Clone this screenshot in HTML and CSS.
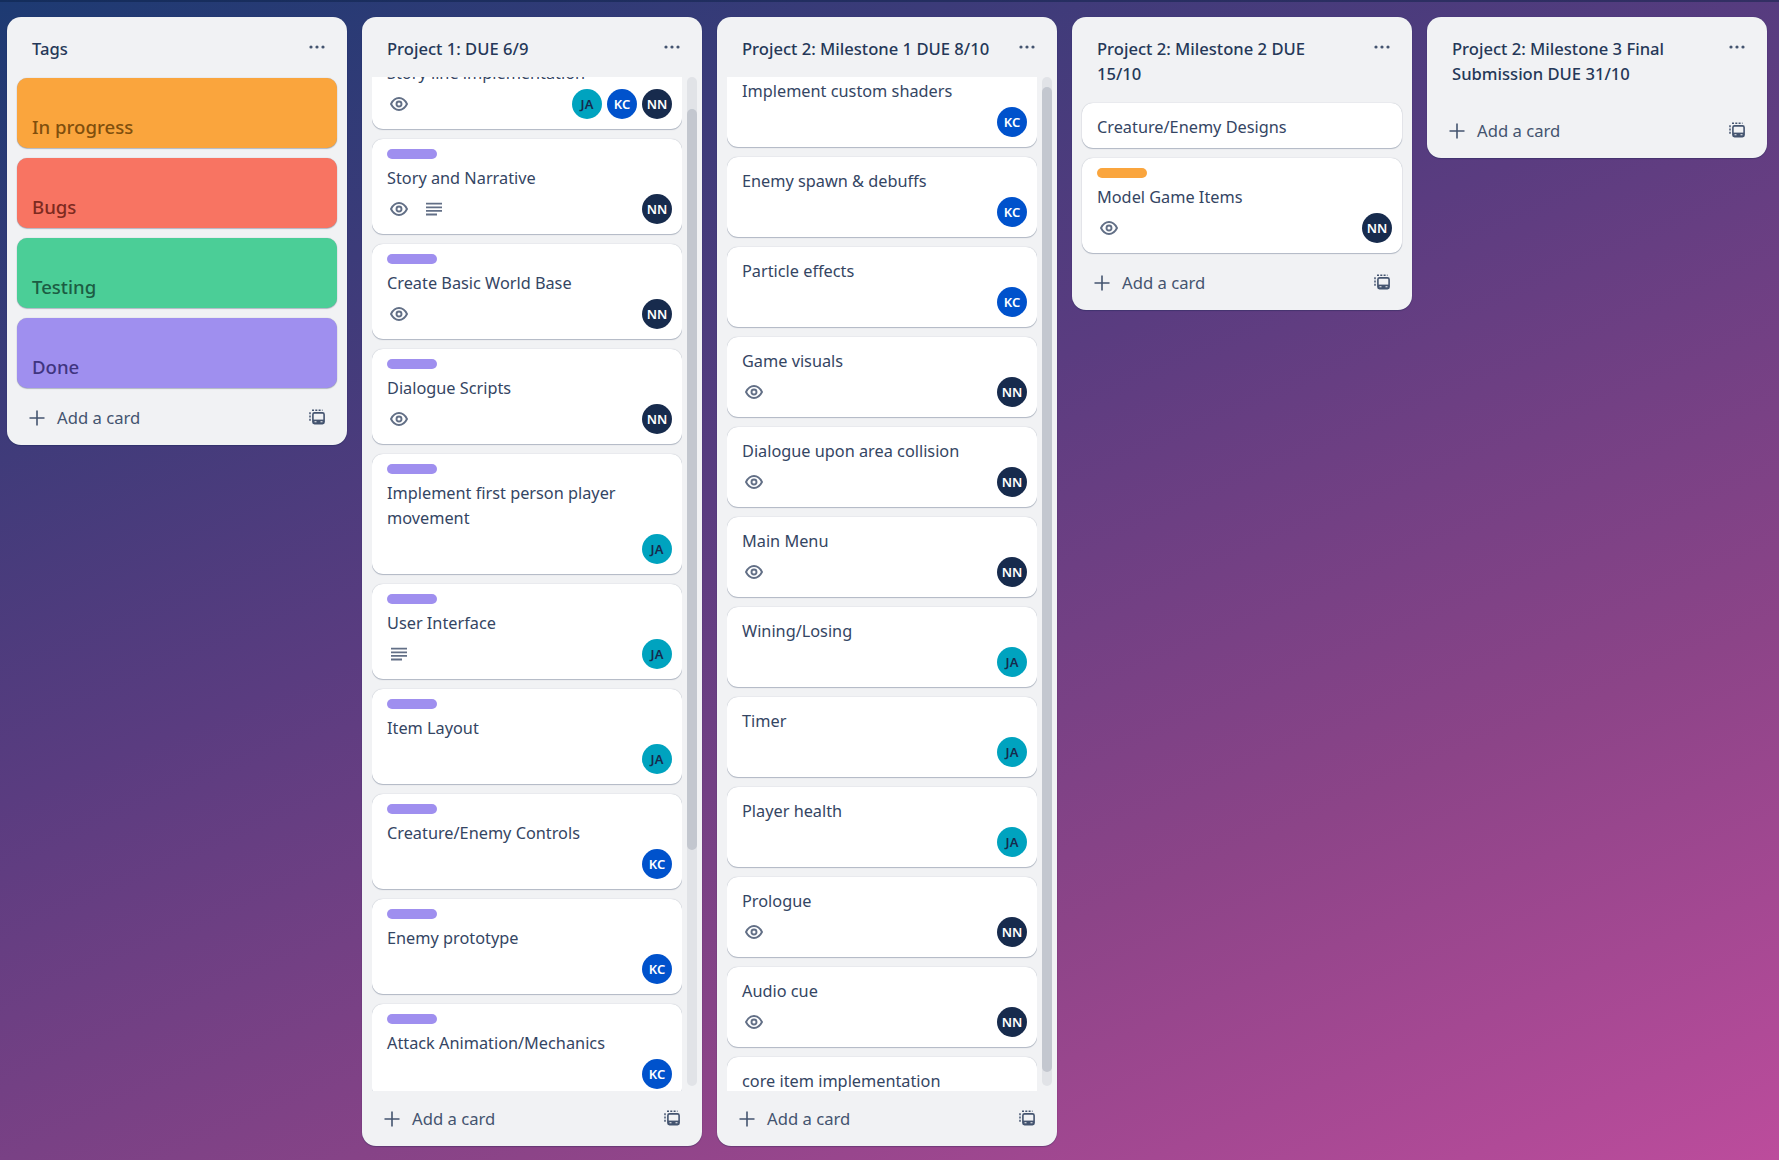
FILE: index.html
```html
<!DOCTYPE html>
<html lang="en">
<head>
<meta charset="utf-8">
<title>Board</title>
<link rel="stylesheet" href="styles.css">
</head>
<body>
<svg class="defs" width="0" height="0" aria-hidden="true">
  <symbol id="i-dots" viewBox="0 0 16 4"><circle cx="2" cy="2" r="1.6"/><circle cx="8" cy="2" r="1.6"/><circle cx="14" cy="2" r="1.6"/></symbol>
  <symbol id="i-plus" viewBox="0 0 16 16"><path d="M7.2 0.5h1.6v6.7h6.7v1.6H8.8v6.7H7.2V8.8H0.5V7.2h6.7z"/></symbol>
  <symbol id="i-tpl" viewBox="0 0 16 16"><path fill="none" stroke="currentColor" stroke-width="1.5" stroke-dasharray="2 1.3" d="M3 1.200h10.500M1 3.200v9.500"/><rect x="3.900" y="3.900" width="11.200" height="10.800" rx="1.600" fill="none" stroke="currentColor" stroke-width="1.600"/><path d="M4 10.600h11v4H4z"/><path fill="#f1f2f4" d="M5.500 12.200h2v1h-2zM11.500 12.200h2v1h-2z"/></symbol>
  <symbol id="i-eye" viewBox="0 0 18 14"><path fill="none" stroke="currentColor" stroke-width="1.900" d="M1 7C3 3 5.800 1 9 1s6 2 8 6c-2 4-4.800 6-8 6S3 11 1 7z"/><circle cx="9" cy="7" r="2.500" fill="none" stroke="currentColor" stroke-width="1.900"/></symbol>
  <symbol id="i-desc" viewBox="0 0 16 14"><path d="M0 0.800h16v1.800H0zM0 4.400h16v1.800H0zM0 8h16v1.800H0zM0 11.600h11v1.800H0z"/></symbol>
</svg>

<main class="board">

  <section class="col">
    <header class="col-head"><h2 class="col-title">Tags</h2><svg class="dots"><use href="#i-dots"/></svg></header>
    <div class="list">
      <div class="tag tag-orange"><span>In progress</span></div>
      <div class="tag tag-red"><span>Bugs</span></div>
      <div class="tag tag-green"><span>Testing</span></div>
      <div class="tag tag-purple"><span>Done</span></div>
    </div>
    <footer class="col-foot"><svg class="plus"><use href="#i-plus"/></svg><span class="add">Add a card</span><svg class="tpl"><use href="#i-tpl"/></svg></footer>
  </section>

  <section class="col col-full">
    <header class="col-head"><h2 class="col-title">Project 1: DUE 6/9</h2><svg class="dots"><use href="#i-dots"/></svg></header>
    <div class="scroll-wrap">
      <div class="scroller scrolled-a">
        <article class="card labelled"><div class="label label-purple"></div><p class="card-text">Story line implementation</p><div class="meta"><svg class="eye"><use href="#i-eye"/></svg><div class="avatars"><span class="av av-ja">JA</span><span class="av av-kc">KC</span><span class="av av-nn">NN</span></div></div></article>
        <article class="card labelled"><div class="label label-purple"></div><p class="card-text">Story and Narrative</p><div class="meta"><svg class="eye"><use href="#i-eye"/></svg><svg class="desc"><use href="#i-desc"/></svg><div class="avatars"><span class="av av-nn">NN</span></div></div></article>
        <article class="card labelled"><div class="label label-purple"></div><p class="card-text">Create Basic World Base</p><div class="meta"><svg class="eye"><use href="#i-eye"/></svg><div class="avatars"><span class="av av-nn">NN</span></div></div></article>
        <article class="card labelled"><div class="label label-purple"></div><p class="card-text">Dialogue Scripts</p><div class="meta"><svg class="eye"><use href="#i-eye"/></svg><div class="avatars"><span class="av av-nn">NN</span></div></div></article>
        <article class="card labelled"><div class="label label-purple"></div><p class="card-text">Implement first person player movement</p><div class="meta"><div class="avatars"><span class="av av-ja">JA</span></div></div></article>
        <article class="card labelled"><div class="label label-purple"></div><p class="card-text">User Interface</p><div class="meta"><svg class="desc desc-first"><use href="#i-desc"/></svg><div class="avatars"><span class="av av-ja">JA</span></div></div></article>
        <article class="card labelled"><div class="label label-purple"></div><p class="card-text">Item Layout</p><div class="meta"><div class="avatars"><span class="av av-ja">JA</span></div></div></article>
        <article class="card labelled"><div class="label label-purple"></div><p class="card-text">Creature/Enemy Controls</p><div class="meta"><div class="avatars"><span class="av av-kc">KC</span></div></div></article>
        <article class="card labelled"><div class="label label-purple"></div><p class="card-text">Enemy prototype</p><div class="meta"><div class="avatars"><span class="av av-kc">KC</span></div></div></article>
        <article class="card labelled"><div class="label label-purple"></div><p class="card-text">Attack Animation/Mechanics</p><div class="meta"><div class="avatars"><span class="av av-kc">KC</span></div></div></article>
      </div>
      <div class="track"><div class="thumb thumb-a"></div></div>
    </div>
    <footer class="col-foot"><svg class="plus"><use href="#i-plus"/></svg><span class="add">Add a card</span><svg class="tpl"><use href="#i-tpl"/></svg></footer>
  </section>

  <section class="col col-full">
    <header class="col-head"><h2 class="col-title">Project 2: Milestone 1 DUE 8/10</h2><svg class="dots"><use href="#i-dots"/></svg></header>
    <div class="scroll-wrap">
      <div class="scroller scrolled-b">
        <article class="card"><p class="card-text">Implement custom shaders</p><div class="meta"><div class="avatars"><span class="av av-kc">KC</span></div></div></article>
        <article class="card"><p class="card-text">Enemy spawn &amp; debuffs</p><div class="meta"><div class="avatars"><span class="av av-kc">KC</span></div></div></article>
        <article class="card"><p class="card-text">Particle effects</p><div class="meta"><div class="avatars"><span class="av av-kc">KC</span></div></div></article>
        <article class="card"><p class="card-text">Game visuals</p><div class="meta"><svg class="eye"><use href="#i-eye"/></svg><div class="avatars"><span class="av av-nn">NN</span></div></div></article>
        <article class="card"><p class="card-text">Dialogue upon area collision</p><div class="meta"><svg class="eye"><use href="#i-eye"/></svg><div class="avatars"><span class="av av-nn">NN</span></div></div></article>
        <article class="card"><p class="card-text">Main Menu</p><div class="meta"><svg class="eye"><use href="#i-eye"/></svg><div class="avatars"><span class="av av-nn">NN</span></div></div></article>
        <article class="card"><p class="card-text">Wining/Losing</p><div class="meta"><div class="avatars"><span class="av av-ja">JA</span></div></div></article>
        <article class="card"><p class="card-text">Timer</p><div class="meta"><div class="avatars"><span class="av av-ja">JA</span></div></div></article>
        <article class="card"><p class="card-text">Player health</p><div class="meta"><div class="avatars"><span class="av av-ja">JA</span></div></div></article>
        <article class="card"><p class="card-text">Prologue</p><div class="meta"><svg class="eye"><use href="#i-eye"/></svg><div class="avatars"><span class="av av-nn">NN</span></div></div></article>
        <article class="card"><p class="card-text">Audio cue</p><div class="meta"><svg class="eye"><use href="#i-eye"/></svg><div class="avatars"><span class="av av-nn">NN</span></div></div></article>
        <article class="card"><p class="card-text">core item implementation</p><div class="meta"><div class="avatars"><span class="av av-nn">NN</span></div></div></article>
      </div>
      <div class="track"><div class="thumb thumb-b"></div></div>
    </div>
    <footer class="col-foot"><svg class="plus"><use href="#i-plus"/></svg><span class="add">Add a card</span><svg class="tpl"><use href="#i-tpl"/></svg></footer>
  </section>

  <section class="col">
    <header class="col-head"><h2 class="col-title">Project 2: Milestone 2 DUE 15/10</h2><svg class="dots"><use href="#i-dots"/></svg></header>
    <div class="list">
      <article class="card card-plain"><p class="card-text">Creature/Enemy Designs</p></article>
      <article class="card labelled"><div class="label label-orange"></div><p class="card-text">Model Game Items</p><div class="meta"><svg class="eye"><use href="#i-eye"/></svg><div class="avatars"><span class="av av-nn">NN</span></div></div></article>
    </div>
    <footer class="col-foot"><svg class="plus"><use href="#i-plus"/></svg><span class="add">Add a card</span><svg class="tpl"><use href="#i-tpl"/></svg></footer>
  </section>

  <section class="col">
    <header class="col-head"><h2 class="col-title">Project 2: Milestone 3 Final Submission DUE 31/10</h2><svg class="dots"><use href="#i-dots"/></svg></header>
    <div class="list list-empty"></div>
    <footer class="col-foot"><svg class="plus"><use href="#i-plus"/></svg><span class="add">Add a card</span><svg class="tpl"><use href="#i-tpl"/></svg></footer>
  </section>

</main>
</body>
</html>
```

FILE: styles.css
```css
* { box-sizing: border-box; }

html, body { height: 100%; }

body {
  margin: 0;
  overflow: hidden;
  font-family: "Noto Sans", "Open Sans", sans-serif;
  color: #172b4d;
  background: linear-gradient(157deg, #1d3a72 0%, #5a3c80 42%, #8c4488 72%, #bc4c9c 100%);
  border-top: 2px solid rgba(9, 30, 66, 0.45);
}

.defs { display: block; height: 0; }

.board {
  display: flex;
  align-items: flex-start;
  gap: 15px;
  padding: 15px 0 0 7px;
}

.col {
  flex: 0 0 340px;
  width: 340px;
  display: flex;
  flex-direction: column;
  background: #f1f2f4;
  border-radius: 14px;
  box-shadow: 0 1px 1px rgba(9, 30, 66, 0.25), 0 0 1px rgba(9, 30, 66, 0.31);
}

.col-full { height: 1129px; }

.col-head {
  display: flex;
  align-items: flex-start;
  justify-content: space-between;
  padding: 19px 22px 17px 25px;
}

.col-title {
  margin: 0;
  flex: 0 0 252px;
  width: 252px;
  font-size: 16.600px;
  line-height: 25px;
  font-weight: 500;
  color: #253858;
}

.dots {
  width: 16px;
  height: 4px;
  margin-top: 9px;
  fill: #44546f;
  flex: none;
}

.list {
  display: flex;
  flex-direction: column;
  gap: 10px;
  padding: 0 10px;
}

.list-empty { margin-bottom: -2px; }

.tag {
  height: 70px;
  border-radius: 10px;
  padding: 0 15px 9px;
  display: flex;
  align-items: flex-end;
  font-size: 18.600px;
  line-height: 25px;
  font-weight: 500;
  box-shadow: 0 1px 1px rgba(9, 30, 66, 0.25), 0 0 1px rgba(9, 30, 66, 0.31);
}

.tag-orange { background: #faa53d; color: #7f4f0d; }
.tag-red { background: #f87462; color: #7d2a20; }
.tag-green { background: #4bce97; color: #1c5c43; }
.tag-purple { background: #9f8fef; color: #3f3580; }

.scroll-wrap {
  flex: 1 1 auto;
  min-height: 0;
  display: flex;
  gap: 5px;
  padding: 0 5px 0 10px;
  margin-top: -1px;
}

.scroller {
  flex: 0 0 310px;
  display: flex;
  flex-direction: column;
  gap: 10px;
  overflow: hidden;
}

.scrolled-a > :first-child { margin-top: -43px; }
.scrolled-b > :first-child { margin-top: -10px; }

.scroller .card { flex: none; }

.track {
  flex: 0 0 10px;
  margin-bottom: 5px;
  background: #e1e3e7;
  border-radius: 5px;
}

.thumb {
  background: #c3c7cf;
  border-radius: 5px;
}

.thumb-a { margin-top: 32px; height: 741px; }
.thumb-b { margin-top: 10px; height: 985px; }

.card {
  background: #fff;
  border-radius: 11px;
  padding: 11px 10px 10px 15px;
  box-shadow: 0 1px 1px rgba(9, 30, 66, 0.25), 0 0 1px rgba(9, 30, 66, 0.31);
}

.card.labelled { padding-top: 10px; }
.card.card-plain { padding-bottom: 9px; }

.label {
  width: 50px;
  height: 10px;
  margin-bottom: 6px;
  border-radius: 5px;
}

.label-purple { background: #9f8fef; }
.label-orange { background: #faa53d; }

.card-text {
  margin: 0;
  padding-top: 1px;
  margin-bottom: -1px;
  font-size: 16.300px;
  line-height: 25px;
  color: #344563;
}

.meta {
  display: flex;
  align-items: center;
  height: 30px;
  margin-top: 4px;
}

.eye {
  width: 18px;
  height: 14px;
  color: #626f86;
  margin-right: 18px;
  margin-left: 3px;
  flex: none;
}

.desc {
  width: 16px;
  height: 14px;
  fill: #626f86;
  flex: none;
}

.desc-first { margin-left: 4px; }

.avatars {
  margin-left: auto;
  display: flex;
  gap: 5px;
}

.av {
  width: 30px;
  height: 30px;
  border-radius: 50%;
  display: flex;
  align-items: center;
  justify-content: center;
  font-size: 13px;
  font-weight: 600;
}

.av-ja { background: #00a3bf; color: #172b4d; }
.av-kc { background: #0052cc; color: #fff; }
.av-nn { background: #172b4d; color: #fff; }

.col-foot {
  display: flex;
  align-items: center;
  flex: none;
  height: 34px;
  margin: 13px 0 10px;
  padding: 0 22px 0 22px;
  color: #44546f;
}

.plus {
  width: 16px;
  height: 16px;
  fill: #44546f;
  flex: none;
}

.add {
  margin-left: 12px;
  margin-top: -2px;
  font-size: 16.670px;
  line-height: 25px;
  flex: 1 1 auto;
}

.tpl {
  width: 16px;
  height: 16px;
  fill: #44546f;
  color: #44546f;
  margin-top: -3px;
  flex: none;
}

.col-full .col-foot { margin-top: 11px; }
```
